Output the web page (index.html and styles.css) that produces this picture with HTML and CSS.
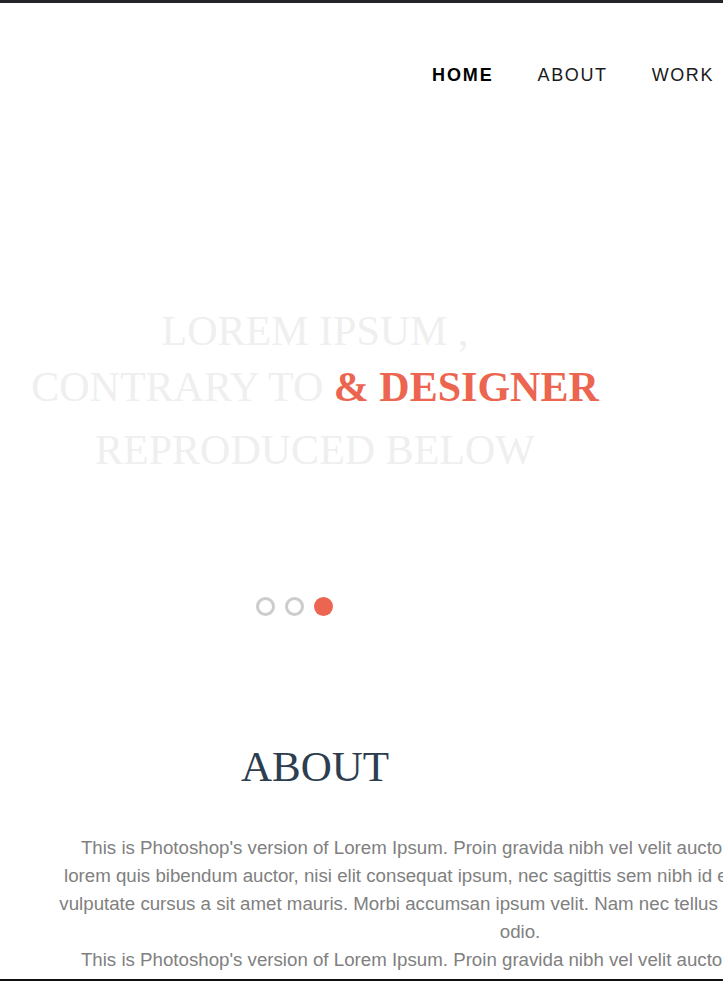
FILE: index.html
```html
<!DOCTYPE html>
<html lang="en">
<head>
<meta charset="utf-8">
<title>Portfolio</title>
<link rel="stylesheet" href="styles.css">
</head>
<body>
<div class="page">
  <header class="site-header">
    <nav class="main-nav">
      <ul class="nav-list">
        <li class="nav-item nav-item--active">HOME</li>
        <li class="nav-item">ABOUT</li>
        <li class="nav-item">WORK</li>
        <li class="nav-item">CONTACT</li>
      </ul>
    </nav>
  </header>

  <section class="hero">
    <div class="hero-line hero-line--first">LOREM IPSUM ,</div>
    <div class="hero-line">CONTRARY TO <span class="hero-accent">&amp; DESIGNER</span></div>
    <div class="hero-line hero-line--last">REPRODUCED BELOW</div>
    <div class="slider-dots">
      <span class="dot"></span>
      <span class="dot"></span>
      <span class="dot dot--active"></span>
    </div>
  </section>

  <section class="about">
    <h2 class="about-title">ABOUT</h2>
    <p class="about-text">This is Photoshop's version of Lorem Ipsum. Proin gravida nibh vel velit auctor aliquet. Aenean sollicitudin, lorem quis bibendum auctor, nisi elit consequat ipsum, nec sagittis sem nibh id elit. Duis sed odio sit amet nibh vulputate cursus a sit amet mauris. Morbi accumsan ipsum velit. Nam nec tellus a odio tincidunt auctor a ornare odio.</p>
    <p class="about-text">This is Photoshop's version of Lorem Ipsum. Proin gravida nibh vel velit auctor aliquet. Aenean sollicitudin, lorem quis bibendum auctor, nisi elit consequat ipsum, nec sagittis sem nibh id elit. Duis sed odio sit amet nibh vulputate cursus a sit amet mauris. Morbi accumsan ipsum velit. Nam nec tellus a odio tincidunt auctor a ornare odio.</p>
  </section>
</div>
<div class="bottom-edge"></div>
</body>
</html>
```

FILE: styles.css
```css
html, body {
  overflow-x: hidden;
}

body {
  margin: 0;
  background: #ffffff;
  font-family: "Liberation Sans", Arial, sans-serif;
}

.page {
  width: 1040px;
  border-top: 3px solid #23252b;
}

.site-header {
  padding-top: 62px;
}

.nav-list {
  display: flex;
  list-style: none;
  margin: 0;
  padding: 0 0 0 410px;
}

.nav-item {
  padding: 0 22px;
  font-size: 18px;
  line-height: 20px;
  letter-spacing: 1.6px;
  color: #1a1a1a;
  white-space: nowrap;
}

.nav-item--active {
  font-weight: bold;
  letter-spacing: 1.9px;
  color: #000000;
}

.hero {
  width: 630px;
  padding-top: 218px;
  text-align: center;
  font-family: "Liberation Serif", "Times New Roman", serif;
  font-size: 42px;
  color: #efefef;
}

.hero-line {
  line-height: 56px;
  white-space: nowrap;
}

.hero-line--last {
  margin-top: 7px;
}

.hero-accent {
  font-weight: bold;
  color: #ec6550;
}

.slider-dots {
  display: flex;
  justify-content: center;
  gap: 10px;
  padding-right: 41px;
  margin-top: 119px;
}

.dot {
  width: 13px;
  height: 13px;
  border: 3px solid #cccccc;
  border-radius: 50%;
}

.dot--active {
  width: 19px;
  height: 19px;
  border: 0;
  background: #ec6550;
}

.about {
  padding-top: 126px;
}

.about-title {
  width: 630px;
  margin: 0;
  text-align: center;
  font-family: "Liberation Serif", "Times New Roman", serif;
  font-weight: normal;
  font-size: 43px;
  line-height: 50px;
  color: #2c3e50;
}

.about-text {
  width: 930px;
  margin: 0 0 0 55px;
  text-align: center;
  font-size: 18.7px;
  line-height: 28px;
  color: #808080;
}

.about-title + .about-text {
  margin-top: 42px;
}

.bottom-edge {
  position: fixed;
  left: 0;
  right: 0;
  bottom: 0;
  height: 2px;
  background: #111111;
}
```
